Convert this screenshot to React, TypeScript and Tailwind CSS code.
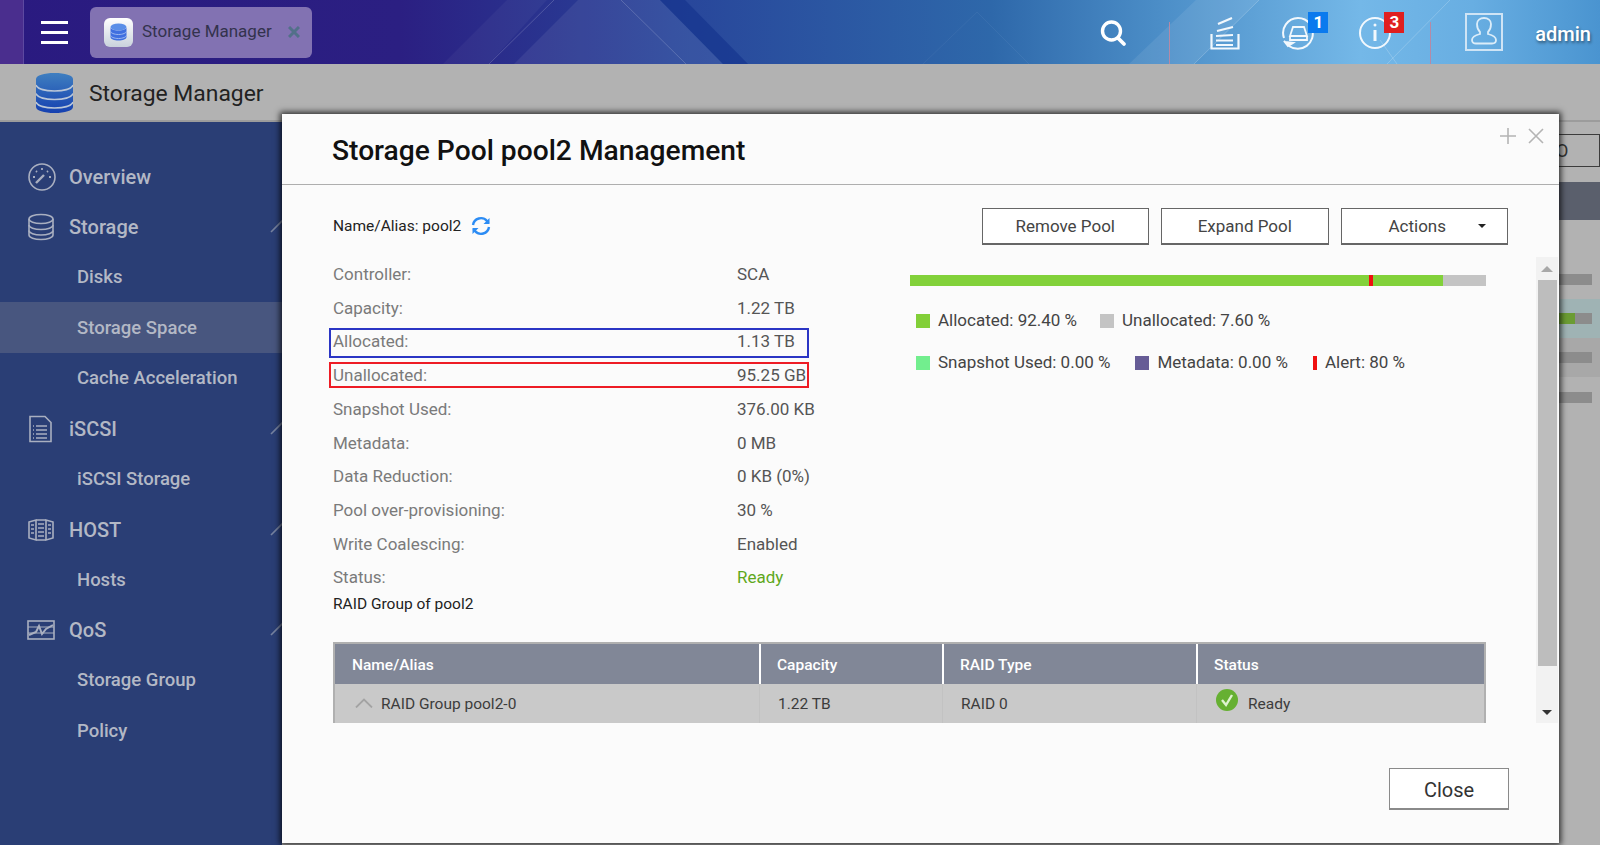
import { ReactNode } from "react";

const sidebar = [
  { label: "Overview", icon: "gauge" },
  { label: "Storage", icon: "db", arrow: true },
  { label: "Disks" },
  { label: "Storage Space", active: true },
  { label: "Cache Acceleration" },
  { label: "iSCSI", icon: "doc", arrow: true },
  { label: "iSCSI Storage" },
  { label: "HOST", icon: "host", arrow: true },
  { label: "Hosts" },
  { label: "QoS", icon: "qos", arrow: true },
  { label: "Storage Group" },
  { label: "Policy" },
];

const details = [
  { label: "Controller:", value: "SCA" },
  { label: "Capacity:", value: "1.22 TB" },
  { label: "Allocated:", value: "1.13 TB", box: "top-[4px] h-[30px] border-[#2b35c4]" },
  { label: "Unallocated:", value: "95.25 GB", box: "top-[4px] h-[26px] border-[#ee1c25]" },
  { label: "Snapshot Used:", value: "376.00 KB" },
  { label: "Metadata:", value: "0 MB" },
  { label: "Data Reduction:", value: "0 KB (0%)" },
  { label: "Pool over-provisioning:", value: "30 %" },
  { label: "Write Coalescing:", value: "Enabled" },
  { label: "Status:", value: "Ready", ready: true },
];

function SideIcon({ name }: { name?: string }) {
  const common = { fill: "none", stroke: "#a9afc0", strokeWidth: 1.6 };
  if (name === "gauge")
    return (
      <svg width="30" height="30" viewBox="0 0 30 30" {...common}>
        <circle cx="15" cy="15" r="13" />
        <path d="M9 21l8-8" strokeWidth="2.4" />
        <path d="M6 15h2M9 9l1 1M15 6v2M21 9l-1 1M24 15h-2" strokeWidth="1.8" />
      </svg>
    );
  if (name === "db")
    return (
      <svg width="28" height="28" viewBox="0 0 28 28" {...common}>
        <ellipse cx="14" cy="6" rx="12" ry="4.5" />
        <path d="M2 6v16c0 2.500 5.400 4.500 12 4.500s12-2 12-4.500V6" />
        <path d="M2 12c0 2.500 5.400 4.500 12 4.500s12-2 12-4.500M2 17.500c0 2.500 5.400 4.500 12 4.500s12-2 12-4.500" />
      </svg>
    );
  if (name === "doc")
    return (
      <svg width="26" height="28" viewBox="0 0 26 28" {...common}>
        <path d="M3 1.500h15l6 6v19H3z" />
        <path d="M9 11h11M9 15h11M9 19h11M9 23h11M6 11h1M6 15h1M6 19h1M6 23h1" />
      </svg>
    );
  if (name === "host")
    return (
      <svg width="28" height="24" viewBox="0 0 28 24" {...common}>
        <path d="M2 4l7-2v20l-7-2zM26 4l-7-2v20l7-2zM9 2h10M9 22h10" />
        <path d="M11 6h6M11 10h6M11 14h6M11 18h6M4 7h3M4 11h3M4 15h3M21 7h3M21 11h3M21 15h3" />
      </svg>
    );
  if (name === "qos")
    return (
      <svg width="28" height="20" viewBox="0 0 28 20" {...common}>
        <rect x="1" y="1" width="26" height="18" />
        <path d="M1 7h26M1 13h26" strokeWidth="1" />
        <path d="M2 15l7-3 3-6 3 8 4-5 7-4" strokeWidth="2" />
      </svg>
    );
  return null;
}

function SideArrow() {
  return (
    <svg width="24" height="14" viewBox="0 0 24 14" fill="none" stroke="#76829f" strokeWidth="1.6" className="ml-auto mr-[-12px] mt-[-2px] shrink-0">
      <path d="M1 13L12 2l11 11" />
    </svg>
  );
}

function OutlineButton({ children, className }: { children: ReactNode; className: string }) {
  return (
    <button className={`flex items-center justify-center border border-b-[2px] bg-white pt-[3px] ${className}`}>
      {children}
    </button>
  );
}

function LegendItem({ swatch, text }: { swatch: string; text: string }) {
  return (
    <div className="flex items-center">
      <span className={`h-[14px] w-[14px] ${swatch}`} />
      <span className="ml-2 pb-[2px] text-[17px] leading-[12px] text-[#444]">{text}</span>
    </div>
  );
}

function Header() {
  return (
    <header className="relative flex h-16 shrink-0 items-center bg-[linear-gradient(90deg,#2a1a80_0%,#2b1f82_25%,#28459a_42%,#2e68aa_62%,#4a8cc6_72%,#74b8e8_85%,#68aee2_92%,#4a94d0_100%)]">
      <svg className="absolute inset-0" width="1600" height="64" viewBox="0 0 1600 64" fill="none">
        <path d="M443 64L507 0h40L489 64z" fill="#ffffff" opacity=".04" />
        <path d="M514 64L578 0h82l63 64z" fill="#ffffff" opacity=".07" />
        <path d="M660 0h25l63 64h-25z" fill="#10308a" opacity=".55" />
        <path d="M489 64L554 0M621 0l65 64" stroke="#ffffff" opacity=".18" />
        <path d="M923 64l54-52 52 52" stroke="#ffffff" opacity=".05" />
        <path d="M1129 64L1196 0h63l-65 64z" fill="#ffffff" opacity=".08" />
        <path d="M1194 64L1259 0M1380 40l17 24M1387 64l63-64" stroke="#ffffff" opacity=".2" />
      </svg>
      <div className="relative h-16 w-6 border-r border-[#5d49a0] bg-[#4a2e8e]" />
      <div className="relative ml-[17px] flex w-[27px] flex-col gap-[7px]">
        <span className="h-[3px] bg-white" />
        <span className="h-[3px] bg-white" />
        <span className="h-[3px] bg-white" />
      </div>
      <div className="relative ml-[22px] flex h-[51px] w-[222px] items-center rounded-md bg-[#8272b2] pl-[14px]">
        <div className="flex h-[29px] w-[29px] items-center justify-center rounded-md bg-[linear-gradient(#ffffff,#c9d2dc)]">
          <svg width="17" height="18" viewBox="0 0 17 18">
            <ellipse cx="8.500" cy="4" rx="8" ry="3.500" fill="#5a8fe8" />
            <path d="M.5 4v10c0 2 3.600 3.500 8 3.500s8-1.500 8-3.500V4c0 2-3.600 3.500-8 3.500S.5 6 .5 4z" fill="#3f6fe0" />
            <path d="M.5 8c0 2 3.600 3.500 8 3.500s8-1.500 8-3.500M.5 12c0 2 3.600 3.500 8 3.500s8-1.500 8-3.500" stroke="#9db8f0" fill="none" />
          </svg>
        </div>
        <span className="ml-[9px] text-[17px] text-[#33324d]">Storage Manager</span>
        <svg className="ml-auto mr-[12px]" width="12" height="12" viewBox="0 0 12 12" stroke="#527089" strokeWidth="3">
          <path d="M1 1l10 10M11 1L1 11" />
        </svg>
      </div>
      <div className="relative ml-auto flex h-16 items-center">
        <svg width="28" height="30" viewBox="0 0 28 30" fill="none" stroke="#fff" className="mr-[42px] mt-[2px]">
          <circle cx="12.500" cy="13" r="9" strokeWidth="3.400" />
          <path d="M19 20l6 6" strokeWidth="3.800" strokeLinecap="round" />
        </svg>
        <div className="mr-[40px] mt-[22px] h-[42px] w-px bg-[#b58aa6]" />
        <svg width="30" height="34" viewBox="0 0 30 34" fill="none" stroke="#f2f8fd" strokeWidth="2.200" className="mr-[41px] mt-[2px]">
          <path d="M1.500 18v14.500h27V18" />
          <path d="M6 29h17M6 24.500h17M6 20l17-1M7 15l16-4M8 8l14-6" />
        </svg>
        <div className="relative mr-[44px] mt-[2px] h-[34px] w-[34px]">
          <svg width="34" height="34" viewBox="0 0 34 34" fill="none" stroke="#f2f8fd" strokeWidth="2">
            <path d="M3 22A15 15 0 0 1 17 2c5 0 9 2 12 6M31 13a15 15 0 0 1-23 17" />
            <path d="M3 25l4 5 5-3-8-1z" fill="#f2f8fd" />
            <path d="M9 20l3-9h11l3 9zM9 20v4h17v-4" strokeWidth="1.800" />
          </svg>
          <span className="absolute left-[27px] top-[-4px] flex h-[21px] w-[20px] items-center justify-center bg-[#0a7aee] text-[17px] font-bold text-white">1</span>
        </div>
        <div className="relative mr-[37px] mt-[2px] h-[34px] w-[34px]">
          <svg width="34" height="34" viewBox="0 0 34 34" fill="none" stroke="#f2f8fd" strokeWidth="2">
            <circle cx="16" cy="17" r="15" />
            <path d="M16 14v11" strokeWidth="3" />
            <circle cx="16" cy="9" r="1.500" fill="#f2f8fd" stroke="none" />
          </svg>
          <span className="absolute left-[25px] top-[-4px] flex h-[21px] w-[20px] items-center justify-center bg-[#e01f1f] text-[17px] font-bold text-white">3</span>
        </div>
        <div className="mr-[34px] mt-[22px] h-[42px] w-px bg-[#b58aa6]" />
        <div className="flex h-[38px] w-[38px] items-end justify-center border-2 border-[#cfe4f5] pb-[4px]">
          <svg width="26" height="28" viewBox="0 0 26 28" fill="none" stroke="#dcedf9" strokeWidth="1.800">
            <path d="M9 15c-2-2-3-5-3-8 0-3.500 3-6 7-6s7 2.500 7 6c0 3-1 6-3 8v2c4 1 8 2.500 8 6 0 2.500-2 3.500-4 3.500H5c-2 0-4-1-4-3.500 0-3.500 4-5 8-6z" />
          </svg>
        </div>
        <span className="ml-[32px] mr-[9px] mt-[3px] text-[20px] font-medium text-white [text-shadow:1px_2px_3px_rgba(0,0,0,0.45)]">admin</span>
      </div>
    </header>
  );
}

function Sidebar() {
  return (
    <nav className="w-[282px] shrink-0 overflow-hidden bg-[#2a3e75] pt-[29px]">
      {sidebar.map((item) => (
        <div
          key={item.label}
          className={`flex h-[50.400px] items-center ${item.active ? "bg-[#48567f]" : ""} ${item.icon ? "pl-[27px] pt-[1.500px] text-[20px]" : "pl-[77px] pt-[2.500px] text-[18.500px]"} font-medium text-[#b3b8c5]`}
        >
          {item.icon && (
            <span className="flex w-[42px] shrink-0 items-center">
              <SideIcon name={item.icon} />
            </span>
          )}
          {item.label}
          {item.arrow && <SideArrow />}
        </div>
      ))}
    </nav>
  );
}

function BackgroundPanel() {
  return (
    <main className="flex flex-1 flex-col items-end bg-[#b2b2b2]">
      <div className="mt-[12px] flex h-[33px] w-[60px] items-center border border-[#3c3c3c] pl-[15px] text-[18px] text-[#333]">O</div>
      <div className="mt-[15px] h-[38px] w-full bg-[#5a5f6c]" />
      <div className="mt-[54px] mr-2 h-[11px] w-[50px] bg-[#8c8c8c]" />
      <div className="mt-[14px] flex h-[39px] w-full items-center justify-end bg-[#9fb3b4] pr-2">
        <div className="flex h-[11px] w-[50px] bg-[#8c8c8c]">
          <span className="w-[33px] bg-[#6b9c33]" />
        </div>
      </div>
      <div className="flex h-[39px] w-full items-center justify-end bg-[#a8a8a8] pr-2">
        <div className="h-[11px] w-[50px] bg-[#8c8c8c]" />
      </div>
      <div className="mt-[15px] mr-2 h-[11px] w-[50px] bg-[#8c8c8c]" />
    </main>
  );
}

function PoolDialog() {
  return (
    <section className="absolute left-[282px] top-[114px] flex h-[729px] w-[1277px] flex-col bg-[#fbfbfb] shadow-[0_0_6px_2px_rgba(0,0,0,0.75)]">
      <div className="flex h-[71px] shrink-0 justify-between border-b border-[#aeaeae] pl-[50px] pr-[15px]">
        <h1 className="mt-[21px] text-[28.200px] font-medium leading-[32px] text-[#111]">Storage Pool pool2 Management</h1>
        <div className="mt-[14px] flex gap-[12px]">
          <svg width="16" height="16" viewBox="0 0 16 16" stroke="#b4b4b4" strokeWidth="1.600">
            <path d="M8 0v16M0 8h16" />
          </svg>
          <svg width="16" height="16" viewBox="0 0 16 16" stroke="#b4b4b4" strokeWidth="1.600">
            <path d="M1 1l14 14M15 1L1 15" />
          </svg>
        </div>
      </div>

      <div className="flex h-[72px] shrink-0 items-center justify-between pl-[51px] pr-[51px] pt-[10px]">
        <div className="flex items-center text-[15.500px] text-[#222]">
          <span className="pt-[2px]">Name/Alias: pool2</span>
          <svg className="ml-[10px]" width="20" height="20" viewBox="0 0 20 20" fill="none" stroke="#2c8cf4" strokeWidth="2.400">
            <path d="M2 9a8 8 0 0 1 14-4l1.500 2M18 11a8 8 0 0 1-14 4l-1.500-2" />
            <path d="M18.500 2v6h-6zM1.500 18v-6h6z" fill="#2c8cf4" stroke="none" />
          </svg>
        </div>
        <div className="flex gap-3 text-[17px] text-[#444]">
          <OutlineButton className="h-[37px] w-[167.500px] border-[#666]">Remove Pool</OutlineButton>
          <OutlineButton className="h-[37px] w-[167.500px] border-[#666]">Expand Pool</OutlineButton>
          <OutlineButton className="relative h-[37px] w-[167.500px] border-[#666] pr-[14px]">
            Actions
            <span className="absolute right-[21px] top-[15px] border-x-[4px] border-t-[4px] border-x-transparent border-t-[#222]" />
          </OutlineButton>
        </div>
      </div>

      <div className="flex h-[466px] shrink-0">
        <div className="w-[1204px] shrink-0 pl-[51px]">
          <div className="flex">
            <div className="w-[577px] shrink-0">
              {details.map((row) => (
                <div key={row.label} className="relative flex h-[33.700px] items-center pt-[2px] text-[17px]">
                  <span className="w-[404px] text-[#7a7a7a]">{row.label}</span>
                  <span className={row.ready ? "text-[#5fa81c]" : "text-[#555]"}>{row.value}</span>
                  {row.box && <span className={`absolute left-[-4px] w-[480px] border-2 ${row.box}`} />}
                </div>
              ))}
            </div>
            <div className="w-[577px]">
              <div className="mt-[18px] flex h-[11px] bg-[#c4c4c4]">
                <div className="relative w-[533px] bg-[#82d13a]">
                  <span className="absolute left-[459px] top-0 h-full w-[4px] bg-[#f01010]" />
                </div>
              </div>
              <div className="ml-[6px] mt-[28px] flex gap-[23px]">
                <LegendItem swatch="bg-[#82cf38]" text="Allocated: 92.40 %" />
                <LegendItem swatch="bg-[#c4c4c4]" text="Unallocated: 7.60 %" />
              </div>
              <div className="ml-[6px] mt-[28px] flex gap-[25px]">
                <LegendItem swatch="bg-[#72ee8e]" text="Snapshot Used: 0.00 %" />
                <LegendItem swatch="bg-[#665c96]" text="Metadata: 0.00 %" />
                <div className="flex items-center">
                  <span className="h-[14px] w-[4px] bg-[#f01010]" />
                  <span className="ml-2 pb-[2px] text-[17px] leading-[12px] text-[#444]">Alert: 80 %</span>
                </div>
              </div>
            </div>
          </div>
          <p className="flex h-5 items-center pt-[2px] text-[15.500px] text-[#222]">RAID Group of pool2</p>
          <div className="mt-[28px] w-[1153px] border-x-2 border-t-2 border-[#b0b0b0] text-[15.500px]">
            <div className="grid h-[40px] grid-cols-[424px_183px_254px_1fr] bg-[#818797] font-medium text-white">
              <div className="flex items-center pl-[17px] pt-[3px]">Name/Alias</div>
              <div className="flex items-center border-l-2 border-white pl-[16px] pt-[3px]">Capacity</div>
              <div className="flex items-center border-l-2 border-white pl-[16px] pt-[3px]">RAID Type</div>
              <div className="flex items-center border-l-2 border-white pl-[16px] pt-[3px]">Status</div>
            </div>
            <div className="grid h-[39px] grid-cols-[424px_183px_254px_1fr] bg-[#c9c9c9] text-[#3c3c3c]">
              <div className="flex items-center pl-[20px] pt-[3px]">
                <svg className="mt-[-3px]" width="18" height="10" viewBox="0 0 18 10" fill="none" stroke="#a3a3a3" strokeWidth="1.800">
                  <path d="M1 9.500L9 1.500l8 8" />
                </svg>
                <span className="ml-[8px]">RAID Group pool2-0</span>
              </div>
              <div className="flex items-center border-l border-[#c2c2c2] pl-[18px] pt-[3px]">1.22 TB</div>
              <div className="flex items-center border-l border-[#c2c2c2] pl-[18px] pt-[3px]">RAID 0</div>
              <div className="flex items-center border-l border-[#c2c2c2] pl-[19px] pt-[3px]">
                <svg className="mt-[-9px]" width="22" height="22" viewBox="0 0 22 22">
                  <circle cx="11" cy="11" r="11" fill="#66b032" />
                  <path d="M6 11l4 5 6-10" fill="none" stroke="#dff3d0" strokeWidth="2.400" />
                </svg>
                <span className="ml-[10px]">Ready</span>
              </div>
            </div>
          </div>
        </div>
        <div className="ml-[50px] flex w-[22px] flex-col items-center bg-[#f2f2f2]">
          <span className="mt-[9px] border-x-[6px] border-b-[6px] border-x-transparent border-b-[#a8a8a8]" />
          <div className="mt-[8px] h-[386px] w-[19px] bg-[#bdbdbd]" />
          <span className="mt-[44px] border-x-[5px] border-t-[5px] border-x-transparent border-t-[#333]" />
        </div>
      </div>

      <div className="flex flex-1 items-start justify-end pr-[50px] pt-[45px]">
        <OutlineButton className="h-[42px] w-[120px] border-[#8a8a8a] text-[20px] text-[#333]">Close</OutlineButton>
      </div>
    </section>
  );
}

export default function App() {
  return (
    <div className="relative flex h-[845px] w-[1600px] flex-col overflow-hidden [font-family:Roboto,sans-serif]">
      <Header />
      <div className="flex h-[58px] shrink-0 items-center border-b-2 border-[#9c9c9c] bg-[#b2b2b2] pl-[36px]">
        <svg className="mt-[1px]" width="37" height="40" viewBox="0 0 37 40">
          <defs>
            <linearGradient id="dbFill" x1="0" y1="0" x2="0" y2="1">
              <stop offset="0" stopColor="#3f7fc0" />
              <stop offset="1" stopColor="#1540b0" />
            </linearGradient>
          </defs>
          <path d="M0 6c0-3.500 8-6 18.500-6S37 2.500 37 6v28c0 3.500-8 6-18.500 6S0 37.500 0 34z" fill="url(#dbFill)" />
          <path d="M0 12c1 3.500 8 6 18.500 6S36 15.500 37 12M0 20.500c1 3.500 8 6 18.500 6s17.500-2.500 18.500-6M0 29c1 3.500 8 6 18.500 6S36 32.500 37 29" fill="none" stroke="#b9c6d8" strokeWidth="1.600" />
        </svg>
        <span className="ml-[16px] mt-[5px] text-[22.900px] text-[#222]">Storage Manager</span>
      </div>
      <div className="flex min-h-0 flex-1">
        <Sidebar />
        <BackgroundPanel />
      </div>
      <PoolDialog />
    </div>
  );
}
